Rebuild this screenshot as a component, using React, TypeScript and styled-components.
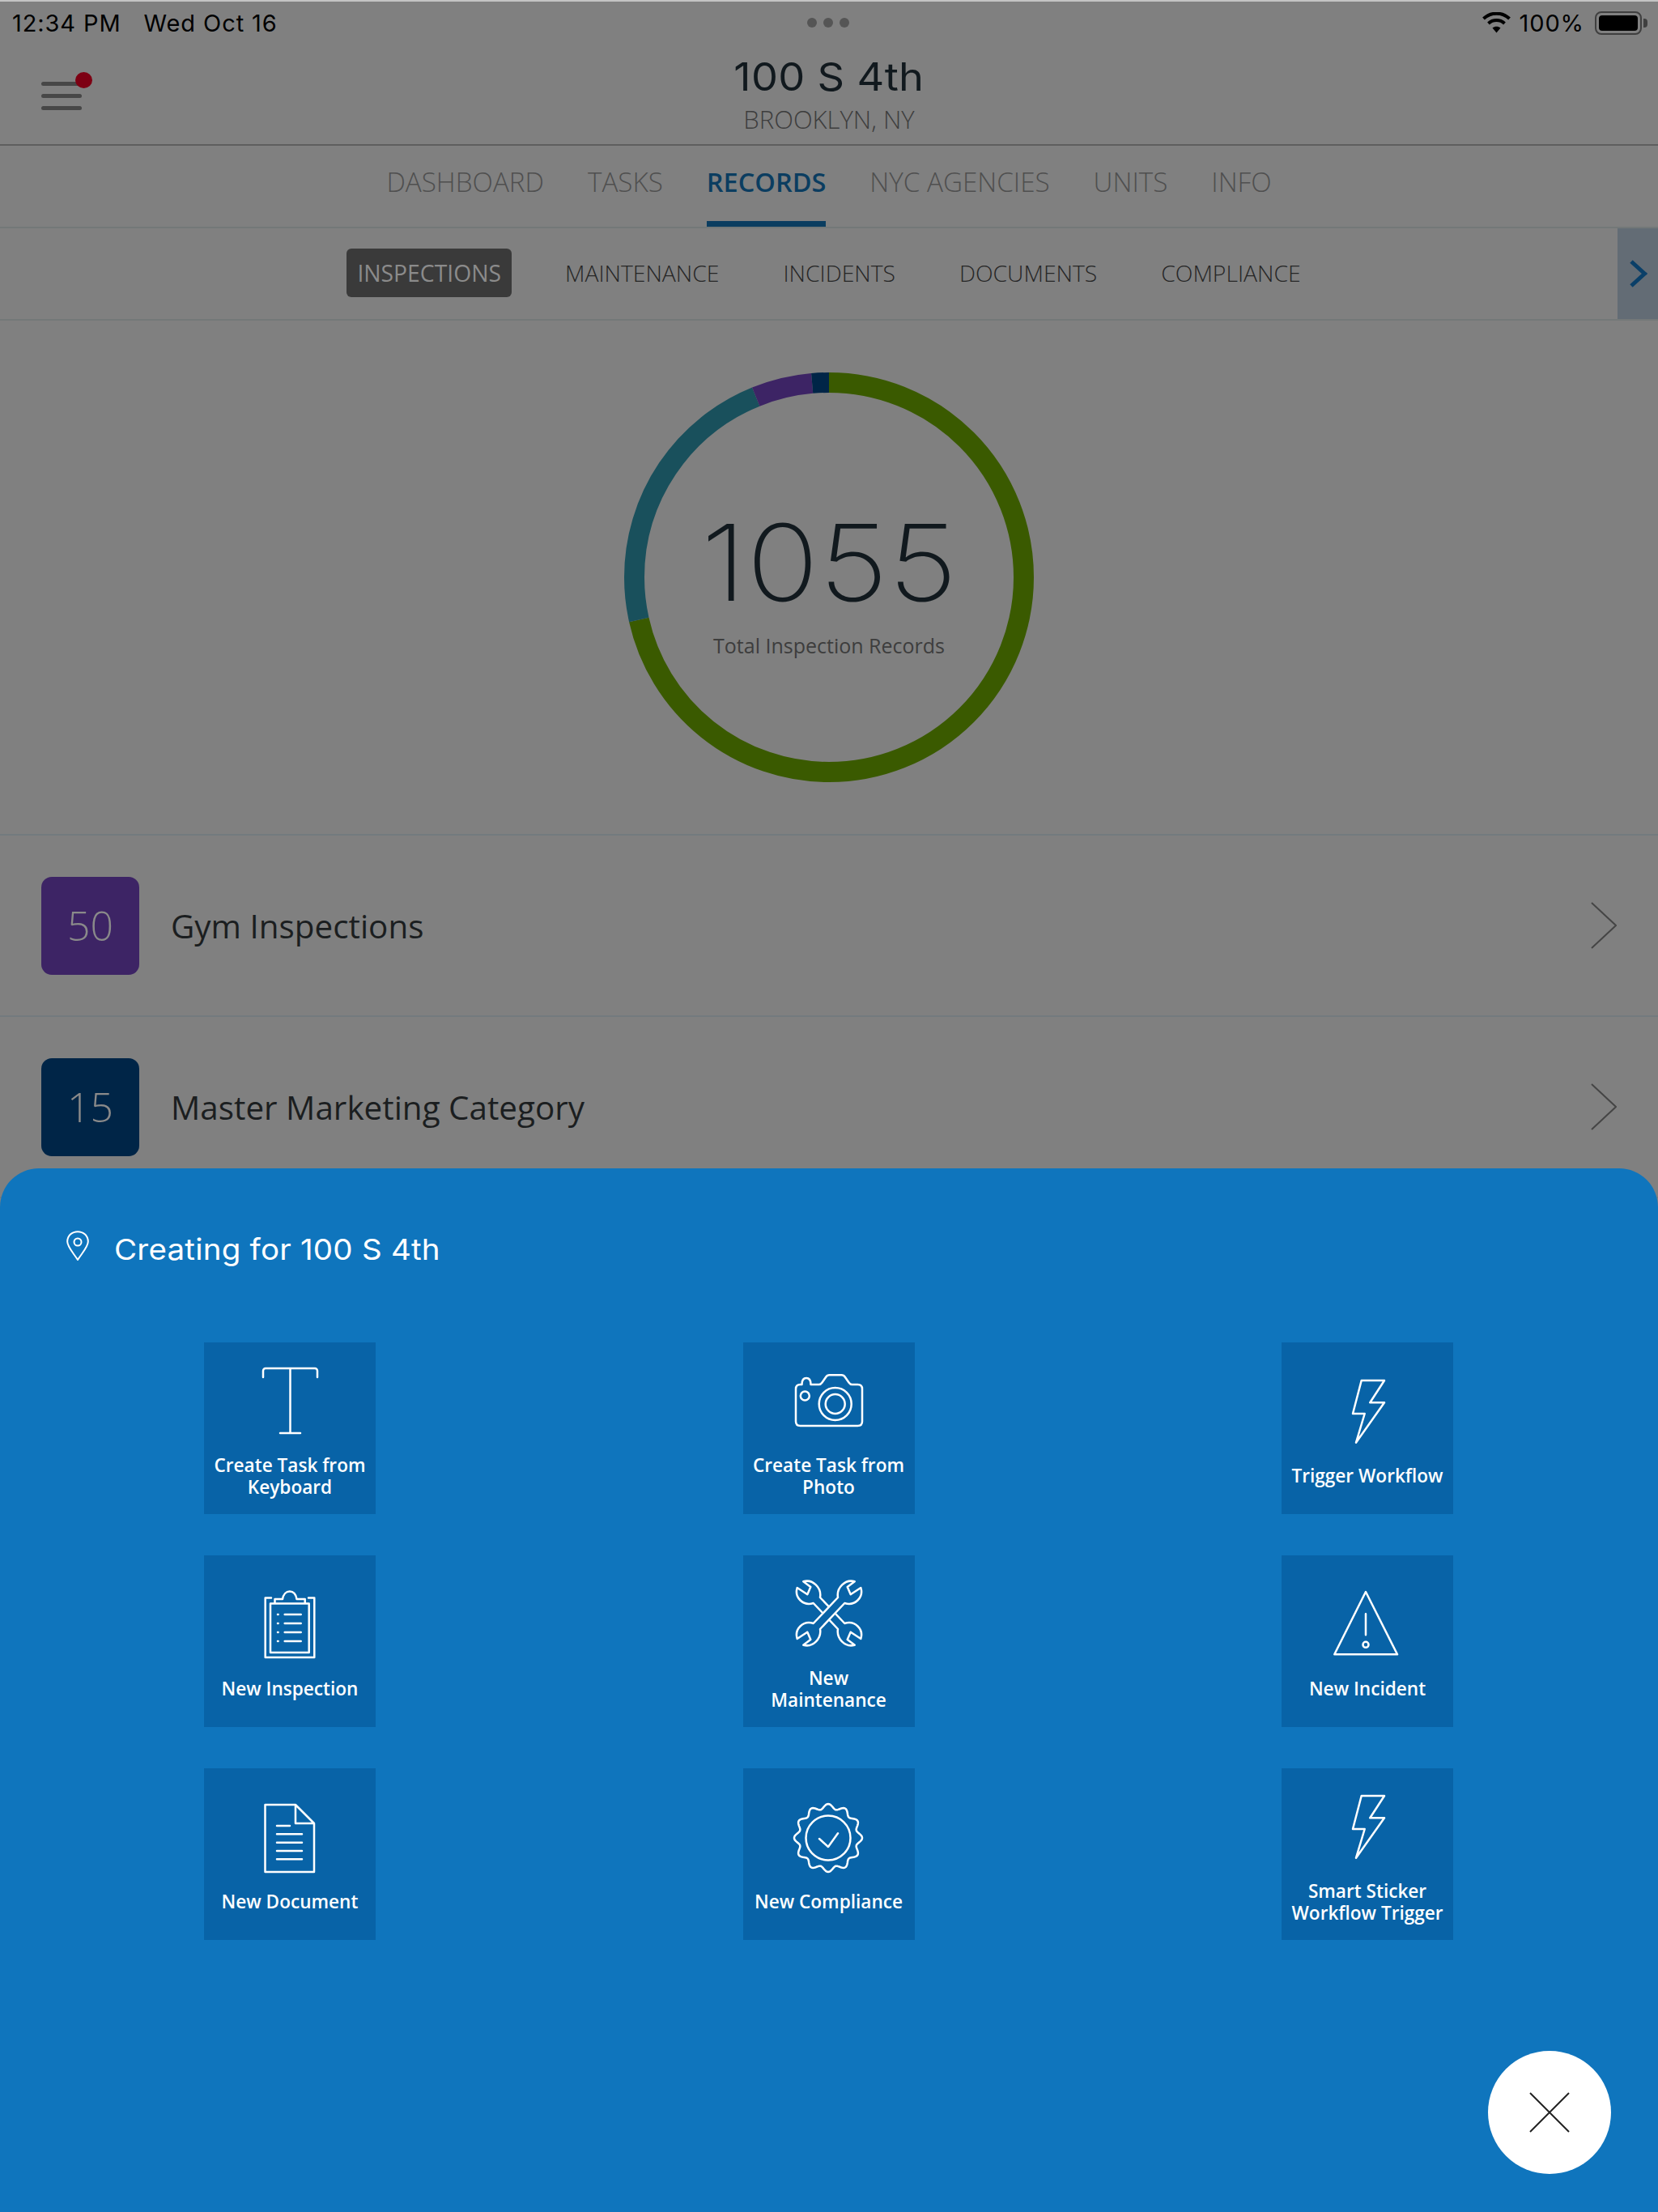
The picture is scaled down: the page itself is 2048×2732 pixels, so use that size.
import React from 'react';
import styled, { createGlobalStyle } from 'styled-components';

const GlobalStyle = createGlobalStyle`
  html, body {
    margin: 0;
    padding: 0;
    background: #808080;
  }
  * {
    box-sizing: border-box;
  }
`;

const OPEN_SANS = `"Open Sans", "Liberation Sans", sans-serif`;
const HEADING = `Inter, "Open Sans", sans-serif`;

const TILE_BLUE = '#0863a7';

const Page = styled.div`
  position: relative;
  width: 2048px;
  height: 2732px;
  overflow: hidden;
  background: #808080;
  font-family: ${OPEN_SANS};
`;

const StatusBar = styled.div`
  position: relative;
  display: flex;
  justify-content: space-between;
  align-items: center;
  height: 54px;
  padding: 0 13px 0 15px;
  border-top: 2px solid #c4c4c4;
  color: #000;
  font-family: Inter, sans-serif;
  font-size: 29px;
  letter-spacing: 0.9px;
`;

const StatusGroup = styled.div`
  display: flex;
  align-items: center;
  gap: ${(p: { $gap: number }) => p.$gap}px;
`;

const Dots = styled.div`
  position: absolute;
  left: 997px;
  top: 20px;
  display: flex;
  gap: 8px;
`;

const Dot = styled.span`
  width: 12px;
  height: 12px;
  border-radius: 50%;
  background: #555;
`;

const Battery = styled.div`
  display: flex;
  align-items: center;
  gap: 2px;
  margin-left: 3px;
`;

const BatteryBody = styled.div`
  width: 58px;
  height: 29px;
  padding: 3px;
  border: 2px solid #3f3f3f;
  border-radius: 8px;

  &::after {
    content: '';
    display: block;
    width: 100%;
    height: 100%;
    border-radius: 4px;
    background: #000;
  }
`;

const BatteryNub = styled.div`
  width: 5px;
  height: 11px;
  border-radius: 0 4px 4px 0;
  background: #3f3f3f;
`;

const Header = styled.header`
  position: relative;
  display: flex;
  flex-direction: column;
  align-items: center;
  height: 126px;
  padding-top: 12px;
  border-bottom: 2px solid #5e5e5e;
`;

const Burger = styled.div`
  position: absolute;
  left: 51px;
  top: 47px;
  display: flex;
  flex-direction: column;
  gap: 10px;
  width: 50px;

  &::after {
    content: '';
    position: absolute;
    right: -13px;
    top: -12px;
    width: 21px;
    height: 20px;
    border-radius: 50%;
    background: #7d0013;
  }
`;

const BurgerLine = styled.span`
  height: 5px;
  border-radius: 3px;
  background: #474747;
`;

const Title = styled.div`
  font-family: ${HEADING};
  font-size: 48px;
  line-height: 58px;
  letter-spacing: 0.3px;
  color: #11191e;
  transform: scaleX(1.09);
`;

const Subtitle = styled.div`
  font-size: 31px;
  line-height: 40px;
  margin-top: 3px;
  font-weight: 300;
  color: #3d3d3d;
`;

const Tabs = styled.nav`
  display: flex;
  justify-content: center;
  gap: 54px;
  height: 102px;
  border-bottom: 2px solid #737878;
`;

const Tab = styled.div<{ $active?: boolean }>`
  display: flex;
  align-items: center;
  height: 100px;
  padding-bottom: 5px;
  font-size: ${(p) => (p.$active ? 32.5 : 33.2)}px;
  font-weight: ${(p) => (p.$active ? 600 : 300)};
  color: ${(p) => (p.$active ? '#0b3d60' : '#4f4f4f')};
  border-bottom: 7px solid ${(p) => (p.$active ? '#0b3d60' : 'transparent')};
`;

const SubTabs = styled.nav`
  position: relative;
  display: flex;
  justify-content: center;
  align-items: center;
  gap: 53px;
  height: 114px;
  padding-bottom: 2px;
  border-bottom: 2px solid #737878;
`;

const SubTab = styled.div<{ $active?: boolean }>`
  display: flex;
  align-items: center;
  height: 60px;
  padding: 0 13px;
  border-radius: 6px;
  font-size: 28.3px;
  font-weight: ${(p) => (p.$active ? 400 : 300)};
  color: ${(p) => (p.$active ? '#8b8b8b' : '#262626')};
  background: ${(p) => (p.$active ? '#3a3a3a' : 'transparent')};
`;

const ScrollHint = styled.div`
  position: absolute;
  right: 0;
  top: 0;
  bottom: 0;
  display: flex;
  align-items: center;
  justify-content: center;
  width: 50px;
  background: #636c75;
`;

const DonutSection = styled.section`
  display: flex;
  justify-content: center;
  align-items: center;
  height: 636px;
  padding-bottom: 1px;
  border-bottom: 2px solid #737a7e;
`;

const Donut = styled.div`
  display: grid;
  place-items: center;
  width: 506px;
  height: 506px;

  > * {
    grid-area: 1 / 1;
  }
`;

const DonutCenter = styled.div`
  display: flex;
  flex-direction: column;
  align-items: center;
  padding-top: 10px;
`;

const Total = styled.div`
  font-family: ${HEADING};
  font-size: 131px;
  font-weight: 200;
  line-height: 150px;
  color: #11191e;
  transform: scaleX(1.13);
`;

const TotalLabel = styled.div`
  margin-top: 9px;
  font-size: 25px;
  line-height: 36px;
  color: #3d3d3d;
`;

const Row = styled.div`
  display: flex;
  align-items: center;
  justify-content: space-between;
  height: 224px;
  padding: 0 51px;
  border-bottom: 2px solid #737a7e;
`;

const RowLeft = styled.div`
  display: flex;
  align-items: center;
  gap: 39px;
`;

const Badge = styled.div<{ $color: string }>`
  display: flex;
  align-items: center;
  justify-content: center;
  width: 121px;
  height: 121px;
  border-radius: 13px;
  font-size: 50px;
  font-weight: 300;
  color: #8a8a8a;
  background: ${(p) => p.$color};
`;

const RowLabel = styled.div`
  font-size: 40.4px;
  color: #1b1e20;
`;

const Sheet = styled.div`
  position: absolute;
  left: 0;
  right: 0;
  bottom: 0;
  height: 1289px;
  padding-top: 77px;
  border-radius: 48px 48px 0 0;
  background: #0f75bd;
  color: #fff;
`;

const SheetHead = styled.div`
  display: flex;
  align-items: center;
  gap: 31px;
  height: 37px;
  padding-left: 82px;
  font-family: ${HEADING};
  font-size: 36px;
`;

const SheetHeadText = styled.span`
  margin-top: 8px;
  transform: scaleX(1.07);
  transform-origin: left center;
  letter-spacing: 0.2px;
`;

const TileGrid = styled.div`
  display: grid;
  grid-template-columns: repeat(3, 212px);
  justify-content: space-between;
  row-gap: 51px;
  margin-top: 101px;
  padding: 0 253px 0 252px;
`;

const Tile = styled.div`
  display: flex;
  flex-direction: column;
  align-items: center;
  justify-content: center;
  gap: 24px;
  height: 212px;
  padding-top: 10px;
  background: ${TILE_BLUE};
`;

const TileLabel = styled.div`
  max-width: 190px;
  font-size: 22.6px;
  font-weight: 600;
  line-height: 27.5px;
  text-align: center;
`;

const TileIcon = styled.svg.attrs({ viewBox: '0 0 84 84', width: 84, height: 84 })`
  display: block;
  flex: none;
  overflow: visible;
  fill: none;
  stroke: #fff;
  stroke-width: 2.5;
  stroke-linejoin: round;
  stroke-linecap: round;
`;

const CloseButton = styled.button`
  position: absolute;
  left: 1838px;
  top: 2533px;
  display: flex;
  align-items: center;
  justify-content: center;
  width: 152px;
  height: 152px;
  padding: 0;
  border: none;
  border-radius: 50%;
  background: #fff;
`;

const sealPath = () => {
  const pts: string[] = [];
  for (let i = 0; i < 240; i++) {
    const a = (i / 240) * Math.PI * 2;
    const r = 39 + 3 * Math.cos(a * 12);
    pts.push(`${(41 + r * Math.sin(a)).toFixed(2)} ${(43 - r * Math.cos(a)).toFixed(2)}`);
  }
  return `M${pts.join('L')}Z`;
};

const WRENCH =
  'M53 22C51 10 62-1 73.7 2.3L64.7 9L68.7 18.3L81.3 10C85 22 74 33 61.3 29L31 61C33 73 22 84 10.3 80.7L19.3 74L15.3 64.7L2.7 73C-1 61 10 50 22.7 54Z';

const KeyboardIcon = () => (
  <TileIcon>
    <path d="M9 13V5a3 3 0 0 1 3-3h61a3 3 0 0 1 3 3v8M42.5 2v80M30 82h25" />
  </TileIcon>
);

const CameraIcon = () => (
  <TileIcon>
    <path d="M6.5 22h2c0-5 2-8 5.500-8s5.500 3 5.500 8h10c2 0 3-1 4-2.500l4.500-6.500c1.200-1.800 2.500-2.700 4.500-2.700h15c2 0 3.300.9 4.500 2.700l4.500 6.500c1 1.500 2 2.500 4 2.500h7c3.700 0 5.500 2 5.500 5.500v40c0 3.700-1.800 5.500-5.500 5.500H6.500c-3.700 0-5.500-1.800-5.500-5.500V27.500c0-3.500 1.800-5.500 5.500-5.500z" />
    <circle cx="49.700" cy="46" r="20" />
    <circle cx="49.700" cy="46" r="12" />
    <circle cx="12.300" cy="36" r="5.500" />
  </TileIcon>
);

const BoltIcon = () => (
  <TileIcon>
    <path d="M34.700 4H63L45.300 31.300H63L28 80.700L38.700 45H24z" />
  </TileIcon>
);

const ClipboardIcon = () => (
  <TileIcon>
    <path d="M19 9.500H11.700V83H72.300V9.500H65" />
    <path d="M23.500 16.500V11H33C34 5 37.500 1.500 41.800 1.500S49.500 5 50.500 11H60.700V16.500zM23.500 16.500H18V77H65.700V16.500H60.700" />
    <path d="M35.700 30h20M35.700 41h20M35.700 52h20M35.700 63h20M27 30h.6M27 41h.6M27 52h.6M27 63h.6" />
  </TileIcon>
);

const WrenchIcon = () => (
  <TileIcon>
    <path d={WRENCH} transform="translate(84 0) scale(-1 1)" />
    <path d={WRENCH} fill={TILE_BLUE} />
  </TileIcon>
);

const WarningIcon = () => (
  <TileIcon>
    <path d="M40 2L79 79.300H1.300zM40 29.300v26" />
    <circle cx="40" cy="67.300" r="3.500" />
  </TileIcon>
);

const DocumentIcon = () => (
  <TileIcon>
    <path d="M11.500 2H49L72 25V85H11.500zM49 2V25H72" />
    <path d="M26 28h16M26 38.300h31M26 48.700h31M26 59h31M26 69.300h31" />
  </TileIcon>
);

const SealIcon = () => (
  <TileIcon>
    <path d={sealPath()} />
    <circle cx="41" cy="43" r="27.500" />
    <path d="M30 44L41 54L53 37.300" />
  </TileIcon>
);

const segments = [
  { value: 754, color: '#3a5a00' },
  { value: 236, color: '#19505c' },
  { value: 50, color: '#3d2465' },
  { value: 15, color: '#002547' },
];

const DonutRing = () => {
  const r = 240.5;
  const c = 2 * Math.PI * r;
  const total = segments.reduce((sum, s) => sum + s.value, 0);
  let offset = 0;
  return (
    <svg width="506" height="506" viewBox="0 0 506 506">
      <g transform="rotate(-90 253 253)">
        {segments.map((s) => {
          const len = (s.value / total) * c;
          const el = (
            <circle
              key={s.color}
              cx="253"
              cy="253"
              r={r}
              fill="none"
              stroke={s.color}
              strokeWidth="25"
              strokeDasharray={`${len} ${c - len}`}
              strokeDashoffset={-offset}
            />
          );
          offset += len;
          return el;
        })}
      </g>
    </svg>
  );
};

const tiles = [
  { label: 'Create Task from Keyboard', icon: <KeyboardIcon /> },
  { label: 'Create Task from Photo', icon: <CameraIcon /> },
  { label: 'Trigger Workflow', icon: <BoltIcon /> },
  { label: 'New Inspection', icon: <ClipboardIcon /> },
  { label: 'New Maintenance', icon: <WrenchIcon /> },
  { label: 'New Incident', icon: <WarningIcon /> },
  { label: 'New Document', icon: <DocumentIcon /> },
  { label: 'New Compliance', icon: <SealIcon /> },
  { label: 'Smart Sticker Workflow Trigger', icon: <BoltIcon /> },
];

const App: React.FC = () => {
  return (
    <Page>
      <GlobalStyle />
      <StatusBar>
        <StatusGroup $gap={28}>
          <span>12:34 PM</span>
          <span>Wed Oct 16</span>
        </StatusGroup>
        <Dots>
          <Dot />
          <Dot />
          <Dot />
        </Dots>
        <StatusGroup $gap={10}>
          <svg width="37" height="26" viewBox="0 0 37 26">
            <path d="M18.500 25.500L13.500 19.500C16.500 17 20.500 17 23.500 19.500z" fill="#000" />
            <path d="M8.500 14C14 8.800 23 8.800 28.500 14" fill="none" stroke="#000" strokeWidth="4" />
            <path d="M2.500 8C11.500-.5 25.500-.5 34.500 8" fill="none" stroke="#000" strokeWidth="4" />
          </svg>
          <span>100%</span>
          <Battery>
            <BatteryBody />
            <BatteryNub />
          </Battery>
        </StatusGroup>
      </StatusBar>

      <Header>
        <Burger>
          <BurgerLine />
          <BurgerLine />
          <BurgerLine />
        </Burger>
        <Title>100 S 4th</Title>
        <Subtitle>BROOKLYN, NY</Subtitle>
      </Header>

      <Tabs>
        <Tab>DASHBOARD</Tab>
        <Tab>TASKS</Tab>
        <Tab $active>RECORDS</Tab>
        <Tab>NYC AGENCIES</Tab>
        <Tab>UNITS</Tab>
        <Tab>INFO</Tab>
      </Tabs>

      <SubTabs>
        <SubTab $active>INSPECTIONS</SubTab>
        <SubTab>MAINTENANCE</SubTab>
        <SubTab>INCIDENTS</SubTab>
        <SubTab>DOCUMENTS</SubTab>
        <SubTab>COMPLIANCE</SubTab>
        <ScrollHint>
          <svg width="23" height="34" viewBox="0 0 23 34">
            <path d="M3 2L19.500 17L3 32" fill="none" stroke="#0a3f68" strokeWidth="5" />
          </svg>
        </ScrollHint>
      </SubTabs>

      <DonutSection>
        <Donut>
          <DonutRing />
          <DonutCenter>
            <Total>1055</Total>
            <TotalLabel>Total Inspection Records</TotalLabel>
          </DonutCenter>
        </Donut>
      </DonutSection>

      <Row>
        <RowLeft>
          <Badge $color="#3d2465">50</Badge>
          <RowLabel>Gym Inspections</RowLabel>
        </RowLeft>
        <svg width="32" height="58" viewBox="0 0 32 58">
          <path d="M1 1L31 29L1 57" fill="none" stroke="#454545" strokeWidth="2" />
        </svg>
      </Row>
      <Row>
        <RowLeft>
          <Badge $color="#002547">15</Badge>
          <RowLabel>Master Marketing Category</RowLabel>
        </RowLeft>
        <svg width="32" height="58" viewBox="0 0 32 58">
          <path d="M1 1L31 29L1 57" fill="none" stroke="#454545" strokeWidth="2" />
        </svg>
      </Row>

      <Sheet>
        <SheetHead>
          <svg width="28" height="37" viewBox="0 0 28 37">
            <path
              d="M14 36C9 28 1.200 20 1.200 13.500C1.200 6 7 1.200 14 1.200S26.800 6 26.800 13.500C26.800 20 19 28 14 36z"
              fill="none"
              stroke="#fff"
              strokeWidth="2"
              strokeLinejoin="round"
            />
            <circle cx="14" cy="14" r="4.500" fill="none" stroke="#fff" strokeWidth="2" />
          </svg>
          <SheetHeadText>Creating for 100 S 4th</SheetHeadText>
        </SheetHead>
        <TileGrid>
          {tiles.map((t) => (
            <Tile key={t.label}>
              {t.icon}
              <TileLabel>{t.label}</TileLabel>
            </Tile>
          ))}
        </TileGrid>
      </Sheet>

      <CloseButton aria-label="Close">
        <svg width="52" height="52" viewBox="0 0 52 52">
          <path d="M2 2L50 50M50 2L2 50" fill="none" stroke="#222" strokeWidth="2" />
        </svg>
      </CloseButton>
    </Page>
  );
};

export default App;
